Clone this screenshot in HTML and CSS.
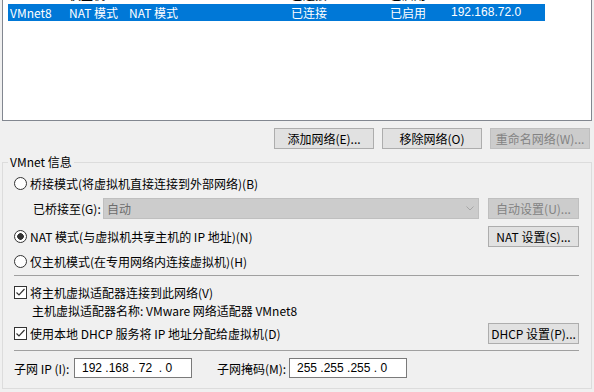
FILE: index.html
```html
<!DOCTYPE html>
<html lang="zh-CN">
<head>
  <meta charset="UTF-8">
  <title>虚拟网络编辑器</title>
  <link rel="stylesheet" href="styles.css">
</head>
<body>
  <div class="list">
    <div class="row partial">
      <span>VMnet1</span><span>仅主机...</span><span>-</span><span>已连接</span><span>已启用</span><span class="ip">192.168.10.0</span>
    </div>
    <div class="row selected">
      <span>VMnet8</span><span>NAT 模式</span><span>NAT 模式</span><span>已连接</span><span>已启用</span><span class="ip">192.168.72.0</span>
    </div>
  </div>

  <div class="actions">
    <button class="btn">添加网络(E)...</button>
    <button class="btn">移除网络(O)</button>
    <button class="btn" disabled>重命名网络(W)...</button>
  </div>

  <fieldset class="group">
    <legend>VMnet 信息</legend>

    <div class="line first"><span class="radio"></span>桥接模式(将虚拟机直接连接到外部网络)(B)</div>

    <div class="line bridge">
      <span class="bridge-label">已桥接至(G):</span>
      <div class="combo">
        <span>自动</span>
        <svg width="8" height="5" viewBox="0 0 8 5"><polyline points="0.5,0.5 4,4 7.5,0.5" fill="none" stroke="#a6a6a6" stroke-width="1"/></svg>
      </div>
      <button class="btn small" disabled>自动设置(U)...</button>
    </div>

    <div class="line nat">
      <span class="radio checked"></span>NAT 模式(与虚拟机共享主机的 IP 地址)(N)
      <button class="btn small push">NAT 设置(S)...</button>
    </div>

    <div class="line host"><span class="radio"></span>仅主机模式(在专用网络内连接虚拟机)(H)</div>

    <div class="sep"></div>

    <div class="line check-row">
      <span class="check">
        <svg width="11" height="11" viewBox="0 0 11 11"><polyline points="1.5,5.5 4,8 9.5,2" fill="none" stroke="#333" stroke-width="1.2"/></svg>
      </span>将主机虚拟适配器连接到此网络(V)
    </div>
    <div class="adapter">主机虚拟适配器名称: VMware 网络适配器 VMnet8</div>

    <div class="line dhcp">
      <span class="check">
        <svg width="11" height="11" viewBox="0 0 11 11"><polyline points="1.5,5.5 4,8 9.5,2" fill="none" stroke="#333" stroke-width="1.2"/></svg>
      </span>使用本地 DHCP 服务将 IP 地址分配给虚拟机(D)
      <button class="btn small push">DHCP 设置(P)...</button>
    </div>

    <div class="sep second"></div>

    <div class="subnet">
      <span class="subnet-label">子网 IP (I):</span>
      <div class="ipbox">192 .168 . 72  . 0</div>
      <span class="subnet-label mask">子网掩码(M):</span>
      <div class="ipbox">255 .255 .255 . 0</div>
    </div>
  </fieldset>
</body>
</html>
```

FILE: styles.css
```css
body {
  margin: 0;
  width: 594px;
  height: 392px;
  overflow: hidden;
  background: #f0f0f0;
  color: #000;
  font-family: "Noto Sans CJK SC", "Noto Sans", sans-serif;
  font-size: 12px;
}

/* network list */
.list {
  box-sizing: border-box;
  margin: -14px 2px 0;
  height: 135px;
  border: 1px solid #828790;
  background: #fff;
}
.row {
  display: grid;
  grid-template-columns: 59px 60px 162px 99px 61px 95px;
  height: 17px;
  line-height: 17px;
  margin: 0 46px 0 5px;
}
.row span {
  padding-left: 2px;
  white-space: nowrap;
  overflow: hidden;
}
.row.partial span {
  line-height: 15px;
}
.row .ip {
  font-family: "Liberation Sans", sans-serif;
}
.row.selected {
  background: #0078d7;
  color: #fff;
}

/* buttons */
.actions {
  display: flex;
  justify-content: flex-end;
  gap: 8px;
  margin-top: 7px;
  padding-right: 4px;
}
.btn {
  box-sizing: border-box;
  width: 100px;
  height: 21px;
  padding: 0;
  border: 1px solid #adadad;
  background: #e1e1e1;
  color: #000;
  font: inherit;
  line-height: 19px;
}
.btn:disabled {
  background: #cccccc;
  border-color: #bfbfbf;
  color: #838383;
}
.btn.small {
  width: 91px;
}
.btn.push {
  margin-left: auto;
}

/* group box */
.group {
  margin: 5px 2px 0;
  padding: 3px 12px 10px 11px;
  border: 1px solid #dcdcdc;
  min-width: 0;
}
.group legend {
  padding: 0 2px;
  margin-left: -6px;
  line-height: 16px;
}
.line {
  display: flex;
  align-items: center;
  height: 21px;
  gap: 3px;
  white-space: nowrap;
}
.line.bridge {
  margin-top: 4px;
  padding-left: 19px;
  gap: 0;
}
.line.nat {
  margin-top: 7px;
}
.line.host {
  margin-top: 4px;
}
.radio {
  box-sizing: border-box;
  width: 13px;
  height: 13px;
  border: 1px solid #333;
  border-radius: 50%;
  background: #fff;
  flex: none;
}
.radio.checked {
  background: radial-gradient(circle, #333 3px, #fff 3.6px);
}
.check {
  box-sizing: border-box;
  display: flex;
  align-items: center;
  justify-content: center;
  width: 13px;
  height: 13px;
  border: 1px solid #333;
  background: #fff;
  flex: none;
}
.bridge-label {
  width: 70px;
}
.combo {
  box-sizing: border-box;
  flex: 1;
  display: flex;
  align-items: center;
  justify-content: space-between;
  height: 21px;
  margin-right: 9px;
  padding: 0 4px 0 3px;
  border: 1px solid #bfbfbf;
  background: #cccccc;
  color: #6d6d6d;
}
.sep {
  margin-top: 3px;
  border-top: 1px solid #a0a0a0;
}
.sep.second {
  margin-top: 6px;
}
.line.check-row {
  margin-top: 6px;
  height: 20px;
}
.adapter {
  height: 18px;
  line-height: 18px;
  padding-left: 18px;
}
.line.dhcp {
  margin-top: 3px;
}
.subnet {
  display: flex;
  align-items: center;
  margin-top: 7px;
  height: 20px;
}
.subnet-label {
  width: 60px;
}
.subnet-label.mask {
  width: 72px;
  margin-left: 25px;
}
.ipbox {
  box-sizing: border-box;
  width: 118px;
  height: 20px;
  line-height: 18px;
  padding-left: 7px;
  border: 1px solid #7a7a7a;
  background: #fff;
  font-family: "Liberation Sans", sans-serif;
  white-space: pre;
}
```
